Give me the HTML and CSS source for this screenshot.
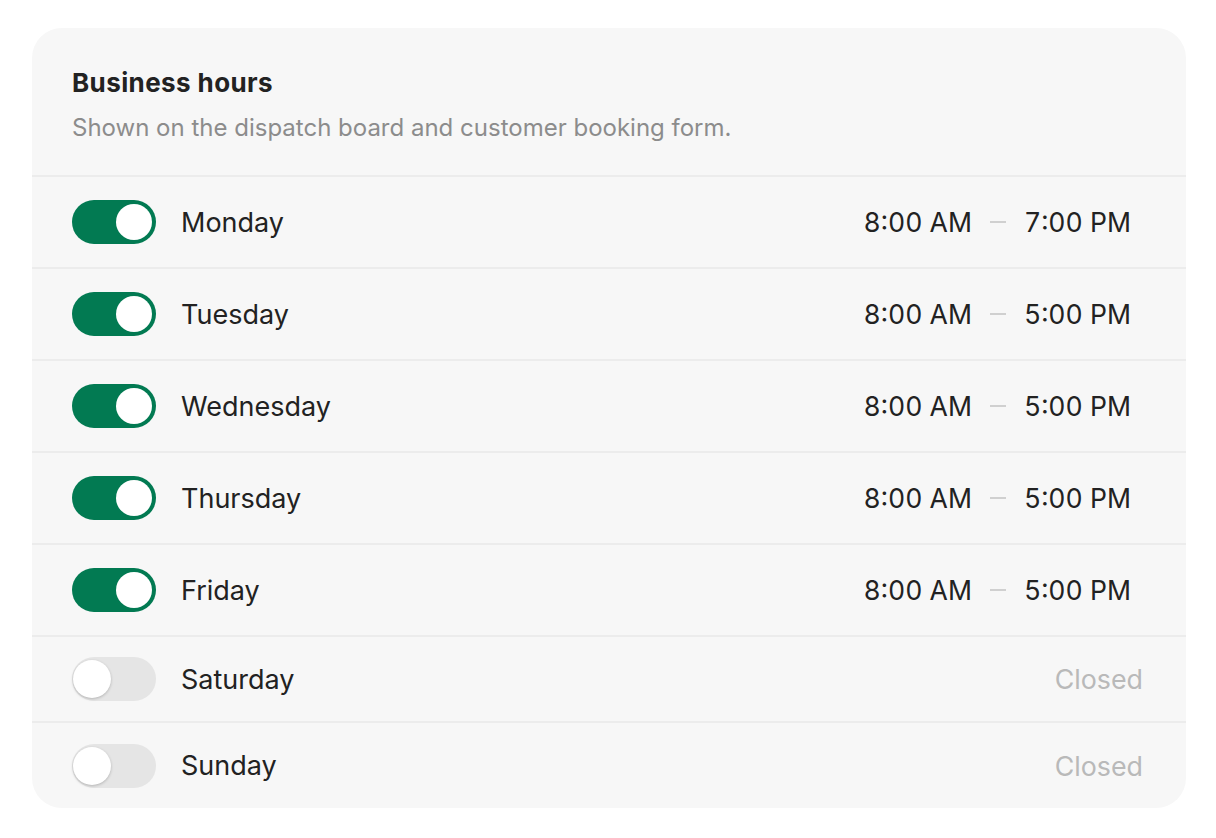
FILE: index.html
```html
<!DOCTYPE html>
<html>
<head>
<meta charset="utf-8">
<link rel="stylesheet" href="styles.css">
</head>
<body>
<div class="card">
  <div class="card-header">
    <h2 class="title">Business hours</h2>
    <p class="subtitle">Shown on the dispatch board and customer booking form.</p>
  </div>
  <div class="row">
    <span class="toggle on"><span class="knob"></span></span>
    <span class="day">Monday</span>
    <span class="hours"><span class="time">8:00 AM</span><span class="dash"></span><span class="time">7:00 PM</span></span>
  </div>
  <div class="row">
    <span class="toggle on"><span class="knob"></span></span>
    <span class="day">Tuesday</span>
    <span class="hours"><span class="time">8:00 AM</span><span class="dash"></span><span class="time">5:00 PM</span></span>
  </div>
  <div class="row">
    <span class="toggle on"><span class="knob"></span></span>
    <span class="day">Wednesday</span>
    <span class="hours"><span class="time">8:00 AM</span><span class="dash"></span><span class="time">5:00 PM</span></span>
  </div>
  <div class="row">
    <span class="toggle on"><span class="knob"></span></span>
    <span class="day">Thursday</span>
    <span class="hours"><span class="time">8:00 AM</span><span class="dash"></span><span class="time">5:00 PM</span></span>
  </div>
  <div class="row">
    <span class="toggle on"><span class="knob"></span></span>
    <span class="day">Friday</span>
    <span class="hours"><span class="time">8:00 AM</span><span class="dash"></span><span class="time">5:00 PM</span></span>
  </div>
  <div class="row closed-row">
    <span class="toggle off"><span class="knob"></span></span>
    <span class="day">Saturday</span>
    <span class="closed">Closed</span>
  </div>
  <div class="row closed-row">
    <span class="toggle off"><span class="knob"></span></span>
    <span class="day">Sunday</span>
    <span class="closed">Closed</span>
  </div>
</div>
</body>
</html>
```
FILE: styles.css
```css
* { box-sizing: border-box; }
html, body { margin: 0; padding: 0; background: #ffffff; }
body {
  font-family: Inter, "Noto Sans", "Liberation Sans", sans-serif;
  color: #222222;
  padding: 28px 30px 30px 32px;
}
.card {
  width: 1154px;
  background: #f7f7f7;
  border-radius: 30px;
  overflow: hidden;
}
.card-header {
  padding: 39px 40px 32px;
  border-bottom: 2px solid #ececec;
}
.title {
  margin: 0;
  font-size: 26px;
  line-height: 32px;
  font-weight: 700;
  letter-spacing: 0.4px;
  color: #222222;
}
.subtitle {
  margin: 14px 0 0;
  font-size: 24px;
  line-height: 30px;
  color: #8c8c8c;
}
.row {
  display: flex;
  align-items: center;
  height: 92px;
  padding: 0 55px 0 40px;
  border-bottom: 2px solid #ececec;
}
.row.closed-row { height: 86px; padding-right: 43px; }
.row:last-child { border-bottom: none; height: 85px; }
.toggle {
  position: relative;
  width: 84px;
  height: 44px;
  border-radius: 22px;
  flex: none;
}
.toggle.on { background: #027a52; }
.toggle.off { background: #e5e5e5; }
.knob {
  position: absolute;
  top: 4px;
  width: 36px;
  height: 36px;
  border-radius: 50%;
  background: #ffffff;
}
.toggle.on .knob { right: 4px; }
.toggle.off .knob {
  left: 1px;
  top: 3px;
  width: 38px;
  height: 38px;
  box-shadow: 0 1px 3px rgba(0,0,0,0.22);
}
.day {
  margin-left: 25px;
  font-size: 27px;
  color: #222222;
}
.hours {
  margin-left: auto;
  display: flex;
  align-items: center;
  font-size: 26.6px;
  font-variant-numeric: tabular-nums;
}
.dash {
  display: inline-block;
  width: 16px;
  height: 2px;
  background: #d0d0d0;
  margin: 0 18px;
}
.closed {
  margin-left: auto;
  font-size: 26.8px;
  color: #b9b9b9;
}
```
